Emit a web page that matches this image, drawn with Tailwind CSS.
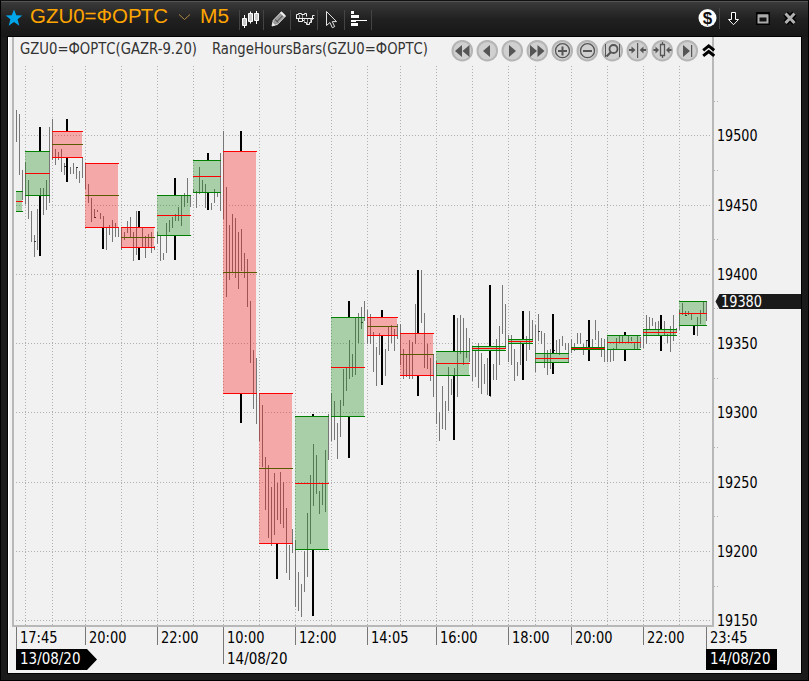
<!DOCTYPE html>
<html lang="ru">
<head>
    <meta charset="UTF-8">
    <title>GZU0=ФОРТС M5</title>
    <script src="https://cdn.jsdelivr.net/npm/@tailwindcss/browser@4"></script>
</head>
<body class="bg-black overflow-hidden">
<div class="w-[809px] h-[681px] flex flex-col border border-black border-t-[#111] bg-[#1a1a1a]">
    <!-- title bar -->
    <header class="h-9 shrink-0 flex items-stretch justify-between bg-linear-to-b from-[#3a3a3a] via-[#202020] to-[#161616] border-t border-[#555]">
        <div class="flex items-stretch">
            <svg class="w-7 h-[34px]" viewBox="1 2 28 34">
                <path d="M14 9.500l2.300 5.800 6 .2-4.700 3.800 1.700 6.400-5.300-3.600-5.300 3.600 1.700-6.400-4.700-3.800 6-.2z" fill="#00a5ea"/>
            </svg>
            <svg class="w-[210px] h-[34px]" viewBox="29 2 210 34" fill="#ffa500" font-family="Liberation Sans, Arial, sans-serif" font-size="20.5">
                <text x="30" y="23.3" textLength="138" lengthAdjust="spacingAndGlyphs">GZU0=ФОРТС</text>
                <path d="M179 14.500l5.500 5 5.500-5" fill="none" stroke="#b58a48"/>
                <text x="200" y="23.3" textLength="29" lengthAdjust="spacingAndGlyphs">M5</text>
            </svg>
            <div class="flex items-center">
                <div class="w-px h-5 bg-[#444]"></div>
                <svg class="w-[23px] h-[34px]" viewBox="240 2 23 34" stroke="#fff" fill="#ccc">
                    <path d="M244.500 14v13M250.500 10.500v12M256.500 10v13" />
                    <path d="M242.500 17.500h4v7h-4zM248.500 12.500h4v8h-4zM254.500 12.500h4v7h-4z"/>
                </svg>
                <div class="w-px h-5 bg-[#444]"></div>
                <svg class="w-[26px] h-[34px]" viewBox="264 2 26 34">
                    <path d="M272 25l1.300-5.700 8-8.300 4.300 4-8.100 8.400z" fill="#999" stroke="#ddd"/>
                    <path d="M275 18.500l3.500 3.200M277 20.500l6-6.200" stroke="#444" fill="none"/>
                    <path d="M280 12l1.500-1.500 4 4-1.300 1.500zM272 25l.8-3.200 2.400 2.200z" fill="#eee"/>
                </svg>
                <div class="w-px h-5 bg-[#444]"></div>
                <svg class="w-[26px] h-[34px]" viewBox="291 2 26 34" fill="none" stroke="#f2f2f2">
                    <path d="M296 17.500h18M296.500 18v-4.500h2v-1h3v1h3v-1h2v3M298.500 18v2.500h4v-3M302.500 19.500h2v2h2v2h3v-2h2v-3h1v-4h2"/>
                    <path d="M304.500 18v3M307.500 18v5M310.500 18v3M299.500 14v3M302.500 14v3" stroke="#999"/>
                </svg>
                <div class="w-px h-5 bg-[#444]"></div>
                <svg class="w-[26px] h-[34px]" viewBox="318 2 26 34">
                    <path d="M326.500 10.500v14l3.400-3 2.400 5.200 2.400-1.100-2.400-5h4.200z" fill="#222" stroke="#e5e5e5"/>
                </svg>
                <div class="w-px h-5 bg-[#444]"></div>
                <svg class="w-[26px] h-[34px]" viewBox="345 2 26 34" fill="#fff">
                    <path d="M351 10h3v3h-3zM351 14h8v3h-8zM351 19h16v1h-16zM351 19h5v2h-5zM351 22h7v3h-7z"/>
                </svg>
                <div class="w-px h-5 bg-[#444]"></div>
            </div>
        </div>
        <svg class="w-[118px] h-[34px]" viewBox="690 2 118 34">
            <circle cx="707.500" cy="18" r="9" fill="#fff"/>
            <text x="707.600" y="23.800" text-anchor="middle" font-family="Liberation Sans, Arial, sans-serif" font-weight="bold" font-size="17" fill="#111">$</text>
            <path d="M719.500 8v21" stroke="#444"/>
            <path d="M731.500 12.500h4v7h3l-5 5.200-5-5.200h3z" fill="#111" stroke="#fff"/>
            <path d="M756 12h14v13h-14z" fill="#000"/>
            <path d="M758.500 15.500h9v7h-9z" fill="#111" stroke="#aaa" stroke-width="2"/>
            <path d="M758 16h10" stroke="#aaa" stroke-width="3"/>
            <path d="M785.500 13.500l9 9.500M794.500 13.500l-9 9.500" stroke="#000" stroke-width="6"/>
            <path d="M785.500 13.500l9 9.500M794.500 13.500l-9 9.500" stroke="#b0b0b0" stroke-width="3"/>
        </svg>
    </header>

    <main class="relative ml-[7px] w-[793px] h-[636px] bg-[#f1f1f1] outline outline-black">
        <svg class="block w-[793px] h-[636px]" viewBox="8 37 793 636" font-family="DejaVu Sans Condensed, DejaVu Sans, sans-serif" font-size="15">
            <path d="M8.500 37v636" stroke="#fff"/>
            <!-- grid -->
            <g id="grid" stroke="#b0b0b0" stroke-dasharray="1 2"></g>
            <path d="M13 37v590M713 37v590" stroke="#b8b8b8" stroke-width="2"/>
            <path d="M12 626h702" stroke="#b8b8b8" stroke-width="2"/>
            <!-- hour ranges over the five minute bars -->
            <g id="bars" stroke="#777"></g>
            <g id="ranges"></g>

            <g fill="#333">
                <text x="20" y="54" textLength="177" lengthAdjust="spacingAndGlyphs">GZU0=ФОРТС(GAZR-9.20)</text>
                <text x="212" y="54" textLength="216" lengthAdjust="spacingAndGlyphs">RangeHoursBars(GZU0=ФОРТС)</text>
            </g>

            <g id="prices" fill="#000"></g>
            <path d="M715.500 301.500l4-7.500H801v15h-81.500z" fill="#1a1a1a"/>
            <text x="721" y="307" fill="#fff" textLength="41" lengthAdjust="spacingAndGlyphs">19380</text>

            <path d="M16.500 627v43M223.500 627v37M706.500 627v30" stroke="#777"/>
            <path d="M85.500 627v18M157.500 627v18M295.500 627v18M367.500 627v18M436.500 627v18M508.500 627v18M571.500 627v18M643.500 627v18" stroke="#777"/>
            <g id="times" fill="#000"></g>
            <path d="M16 649h71l10 10.500-10 10.500H16zM706 649h71v21h-71z"/>
            <text x="20" y="664" fill="#fff" textLength="60.500" lengthAdjust="spacingAndGlyphs">13/08/20</text>
            <text x="227" y="664" textLength="60.500" lengthAdjust="spacingAndGlyphs">14/08/20</text>
            <text x="710" y="664" fill="#fff" textLength="60.500" lengthAdjust="spacingAndGlyphs">14/08/20</text>
        </svg>

        <!-- chart navigation -->
        <div class="absolute left-[443px] top-[3px] flex gap-[3px] text-[#555]">
            <svg class="size-[22px]" viewBox="0 0 22 22" fill="currentColor"><circle cx="11.300" cy="10.700" r="9.800" fill="#d0d0d0" stroke="#b5b5b5" stroke-width="2"/><path d="M11 5v12l-7-6zM18.500 5v12l-7-6z"/></svg>
            <svg class="size-[22px]" viewBox="0 0 22 22" fill="currentColor"><circle cx="11.300" cy="10.700" r="9.800" fill="#d0d0d0" stroke="#b5b5b5" stroke-width="2"/><path d="M14 5v12l-7-6z"/></svg>
            <svg class="size-[22px]" viewBox="0 0 22 22" fill="currentColor"><circle cx="11.300" cy="10.700" r="9.800" fill="#d0d0d0" stroke="#b5b5b5" stroke-width="2"/><path d="M8 5v12l7-6z"/></svg>
            <svg class="size-[22px]" viewBox="0 0 22 22" fill="currentColor"><circle cx="11.300" cy="10.700" r="9.800" fill="#d0d0d0" stroke="#b5b5b5" stroke-width="2"/><path d="M4 5v12l7-6zM11.500 5v12l7-6z"/></svg>
            <svg class="size-[22px]" viewBox="0 0 22 22" fill="none" stroke="currentColor"><circle cx="11.300" cy="10.700" r="9.800" fill="#d0d0d0" stroke="#b5b5b5" stroke-width="2"/><circle cx="11.500" cy="10.700" r="7" stroke-width="1.300"/><path d="M7 11h9M11.500 6.500v9" stroke-width="2"/></svg>
            <svg class="size-[22px]" viewBox="0 0 22 22" fill="none" stroke="currentColor"><circle cx="11.300" cy="10.700" r="9.800" fill="#d0d0d0" stroke="#b5b5b5" stroke-width="2"/><circle cx="11.500" cy="10.700" r="7" stroke-width="1.300"/><path d="M7 11h9" stroke-width="2"/></svg>
            <svg class="size-[22px]" viewBox="0 0 22 22" fill="none" stroke="currentColor"><circle cx="11.300" cy="10.700" r="9.800" fill="#d0d0d0" stroke="#b5b5b5" stroke-width="2"/><path d="M4.500 4v13M18.500 4v13"/><circle cx="12.500" cy="9" r="4" stroke-width="1.800"/><path d="M10 12l-4.500 4.500" stroke-width="2.200"/></svg>
            <svg class="size-[22px]" viewBox="0 0 22 22" fill="currentColor"><circle cx="11.300" cy="10.700" r="9.800" fill="#d0d0d0" stroke="#b5b5b5" stroke-width="2"/><path d="M11 3h1.200v15H11zM3 9h2.500V6.500L9.500 10l-4 3.500V11H3zM20 9h-2.500V6.500L13.700 10l3.800 3.500V11H20z"/></svg>
            <svg class="size-[22px]" viewBox="0 0 22 22" fill="currentColor"><circle cx="11.300" cy="10.700" r="9.800" fill="#d0d0d0" stroke="#b5b5b5" stroke-width="2"/><path d="M9.500 4.500h4v11h-4zM11.500 2v2.500M11.500 15.500V18" fill="none" stroke="#555" stroke-width="1.300"/><path d="M2.500 9h2V6.500L8 10l-3.500 3.500V11h-2zM20.500 9h-2V6.500L15 10l3.500 3.500V11h2z"/></svg>
            <svg class="size-[22px]" viewBox="0 0 22 22" fill="currentColor"><circle cx="11.300" cy="10.700" r="9.800" fill="#d0d0d0" stroke="#b5b5b5" stroke-width="2"/><path d="M7 5v12l7-6zM15 5h1.200v12H15z"/></svg>
            <svg class="w-[14px] h-[22px]" viewBox="-1 0 14 22" fill="none" stroke="#000" stroke-width="3"><path d="M1.200 10.300L6.700 5.900l5.500 4.400M1.200 15.900l5.500-4.400 5.500 4.400"/></svg>
        </div>
    </main>
</div>

<script>
    // five minute bars: x, high, low
    const bars = [
        [16,110,142],[19,114,175],[22,170,200],[25,162,204],[28,180,219],[31,211,242],[34,235,257],[37,209,250],[40,188,215],
        [43,188,215],[46,180,210],[49,127,203],[52,119,160],[55,149,165],[58,152,160],[61,149,172],[64,163,175],[70,167,174],
        [73,163,174],[76,167,179],[79,171,183],[82,157,178],[85,164,189],[88,184,203],[91,198,222],[94,209,218],[97,210,212],
        [100,213,219],[103,216,227],[106,228,250],[109,225,235],[112,220,242],[115,223,237],[118,227,237],[121,227,250],
        [124,232,240],[127,221,233],[130,217,237],[133,232,261],[136,211,255],[142,228,248],[145,236,258],[148,234,248],
        [151,232,253],[154,246,250],[157,232,244],[160,236,261],[163,253,260],[166,223,253],[169,220,232],[172,217,228],
        [175,214,221],[178,207,221],[181,196,226],[184,193,207],[187,178,203],[190,196,207],[193,189,192],[196,191,208],
        [199,167,194],[202,180,192],[205,184,208],[211,203,210],[214,189,203],[217,192,197],[220,153,211],[223,131,219],
        [226,187,297],[229,225,280],[232,214,272],[235,218,278],[238,232,289],[241,229,271],[244,253,278],[247,259,307],
        [250,301,363],[253,350,409],[256,358,424],[259,393,441],[262,405,467],[265,457,510],[268,465,538],[271,487,546],
        [274,473,535],[277,483,520],[280,472,524],[283,482,528],[286,508,573],[289,545,580],[292,529,553],[295,540,607],
        [298,572,611],[301,584,617],[304,551,592],[307,513,577],[310,475,544],[313,444,506],[316,455,494],[319,491,514],
        [322,483,505],[325,450,512],[328,414,460],[331,393,441],[334,401,440],[337,423,459],[340,400,437],[343,369,406],
        [346,367,391],[349,340,379],[352,354,377],[355,318,375],[358,313,343],[361,307,329],[364,301,321],[367,310,344],
        [370,314,344],[373,332,372],[376,347,386],[379,333,355],[385,349,376],[388,326,351],[391,325,343],[394,329,351],
        [397,324,339],[400,324,365],[403,349,379],[406,354,377],[409,340,379],[412,342,379],[415,304,344],[421,270,323],
        [424,313,368],[427,344,369],[430,358,381],[433,354,397],[436,361,424],[439,412,441],[442,386,429],[445,401,430],
        [448,367,411],[451,379,395],[454,368,376],[457,318,397],[460,315,354],[463,318,365],[466,328,358],[469,338,362],
        [472,347,381],[475,350,377],[478,343,388],[481,353,394],[484,364,384],[487,358,395],[490,350,397],[493,364,380],
        [496,339,380],[499,326,365],[502,285,334],[505,304,349],[508,335,362],[511,335,365],[514,349,381],[517,362,376],
        [520,341,365],[526,336,361],[529,311,350],[532,320,342],[535,325,372],[538,314,341],[541,331,344],[544,333,368],
        [547,350,375],[550,349,369],[556,340,353],[559,339,355],[562,336,346],[565,343,350],[568,343,362],[571,339,353],
        [574,343,351],[577,333,344],[580,333,344],[583,344,355],[586,340,348],[592,339,350],[595,320,340],[598,331,349],
        [601,338,357],[604,339,362],[607,337,362],[610,350,362],[613,348,361],[616,338,350],[619,336,343],[622,335,343],
        [628,336,343],[631,337,341],[634,343,349],[637,336,350],[640,337,348],[643,330,348],[646,315,344],[649,317,329],
        [652,318,326],[655,322,329],[658,321,335],[664,321,336],[667,334,343],[670,326,352],[673,315,341],[676,328,333],
        [679,310,330],[682,303,315],[685,311,315],[688,311,315],[691,313,320],[697,317,336],[700,310,324],[703,302,313],[706,302,321]
    ];
    // close marks of the flat bars
    const marks = [[34,241],[64,166],[76,167],[94,217],[361,322],[538,331],[553,350],[586,340],[685,315]];

    // x1, x2, top, middle, bottom, rising, wick x, high, low
    const ranges = [
        [16,23,191,201,211,1],[25,50,151,173,195,1,40,127,256],[52,83,131,144,157,0,67,119,182],
        [85,119,163,195,227,0,103,163,249],[121,155,227,237,247,0,139,211,260],[157,191,195,215,235,1,175,178,260],
        [193,221,160,176,192,1,208,153,210],[223,257,151,272,393,0,241,131,423],[259,293,393,468,543,0,277,393,579],
        [295,329,416,483,549,1,313,414,616],[331,365,317,367,416,1,349,301,458],[367,398,317,326,335,0,382,310,385],
        [400,434,333,354,375,0,418,270,396],[436,470,351,363,375,1,454,315,440],[472,506,346,348,350,1,490,285,396],
        [508,533,339,341,343,1,523,311,380],[535,569,353,358,362,1,553,314,374],[571,605,347,348,349,1,589,320,361],
        [607,641,335,342,349,1,625,332,361],[643,677,329,332,335,1,661,315,351],[679,707,301,313,325,1,694,301,335]
    ];

    let grid = '';
    [25,52,85,121,157,193,223,259,295,331,367,400,436,472,508,535,571,607,643,679].forEach(x => {
        grid += `<path d="M${x}.5 66V626"/>`;
    });
    const rows = [135,205,274,343,412,482,551,620];
    let prices = '';
    rows.forEach((y, i) => {
        grid += `<path d="M13 ${y}.5H714"/>`;
        grid += `<path d="M714 ${[101,170,239,308,378,447,516,586][i]}.5h4"/>`;
        prices += `<text x="717" y="${y + 5.5}" textLength="40.5" lengthAdjust="spacingAndGlyphs">${19500 - i * 50}</text>`;
    });
    document.getElementById('grid').innerHTML = grid;
    document.getElementById('prices').innerHTML = prices;

    document.getElementById('bars').innerHTML =
        bars.map(b => `<path d="M${b[0]}.5 ${b[1]}V${b[2]}"/>`).join('') +
        marks.map(m => `<path d="M${m[0]} ${m[1]}.5h2" stroke="#333"/>`).join('');

    let out = '';
    ranges.forEach(([x1, x2, top, mid, bottom, up, wx, high, low]) => {
        const edge = up ? '#008000' : '#ff0000';
        out += `<path d="M${x1} ${top}H${x2 - 1}V${bottom + 1}H${x1}z" fill="${up ? '#008000' : '#ff0000'}" fill-opacity=".3"/>`;
        if (wx) {
            if (high < top) out += `<path d="M${wx} ${high}V${top}" stroke="#000" stroke-width="2"/>`;
            if (low > bottom) out += `<path d="M${wx} ${bottom + 1}V${low}" stroke="#000" stroke-width="2"/>`;
        }
        out += `<path d="M${x1} ${top}.5H${x2}M${x1} ${bottom}.5H${x2}" stroke="${edge}"/>`;
        out += `<path d="M${x1} ${mid}.5H${x2}" stroke="${up ? '#ff0000' : '#5a5a00'}"/>`;
    });
    document.getElementById('ranges').innerHTML = out;

    const times = [[16,'17:45'],[85,'20:00'],[157,'22:00'],[223,'10:00'],[295,'12:00'],[367,'14:05'],[436,'16:00'],[508,'18:00'],[571,'20:00'],[643,'22:00'],[706,'23:45']];
    document.getElementById('times').innerHTML = times.map(t =>
        `<text x="${t[0] + 4}" y="643" textLength="37.5" lengthAdjust="spacingAndGlyphs">${t[1]}</text>`).join('');
</script>
</body>
</html>
